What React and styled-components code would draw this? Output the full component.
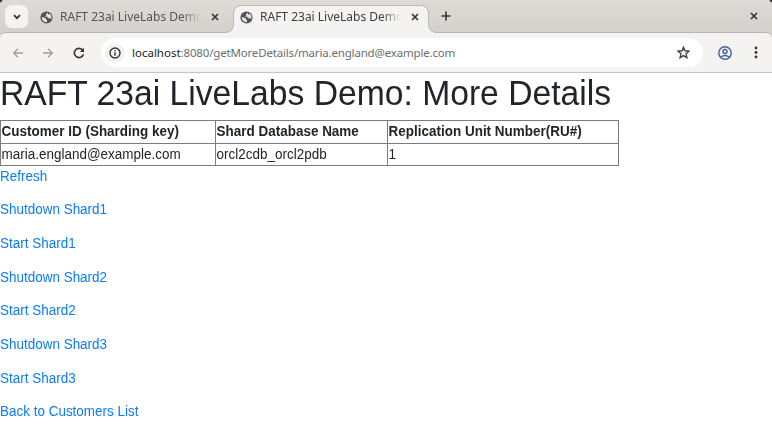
import React from "react";
import styled, { createGlobalStyle } from "styled-components";

const Global = createGlobalStyle`
  * { box-sizing: border-box; }
  body { margin: 0; background: #fff; overflow: hidden; }
`;

const Window = styled.div`
  width: 772px;
  height: 431px;
  overflow: hidden;
  background: #fff;
  font-family: "Liberation Sans", Arial, sans-serif;
  color: #212529;
`;

const Chrome = styled.div`
  background:
    radial-gradient(circle at 0 0, #35302d 1.5px, transparent 3px),
    radial-gradient(circle at 100% 0, #35302d 1.5px, transparent 3px),
    linear-gradient(#dedad7, #d4d0cb 32px);
`;

const TabStrip = styled.header`
  display: flex;
  height: 32px;
  font-family: "Noto Sans", sans-serif;
`;

const TabSearch = styled.button`
  display: grid;
  place-items: center;
  width: 23px;
  height: 23px;
  margin: 5px 0 0 5px;
  padding: 0;
  border: 0;
  border-radius: 7px;
  background: #f5f4f2;
`;

const Tab = styled.div`
  position: relative;
  z-index: 1;
  display: flex;
  align-items: center;
  height: 28px;
  margin: 5px 0 0 ${(p) => (p.$active ? 7 : 5)}px;
  padding: 0 0 5px 6px;
  width: ${(p) => (p.$active ? 196 : 193)}px;
  color: ${(p) => (p.$active ? "#3c4043" : "#53565a")};
  border: 1px solid ${(p) => (p.$active ? "#bdb9b5" : "transparent")};
  border-bottom: 0;
  border-radius: 8px 8px 0 0;
  background: ${(p) => (p.$active ? "#f4f3f2" : "transparent")};
`;

const Flare = styled.svg`
  position: absolute;
  bottom: 0;
  ${(p) => (p.$right ? "right: -9px; transform: scaleX(-1);" : "left: -9px;")}
`;

const TabTitle = styled.span`
  width: 142px;
  margin: 0 9px 0 7px;
  overflow: hidden;
  white-space: nowrap;
  font-size: 12px;
  line-height: 18px;
  mask-image: linear-gradient(90deg, #000 122px, transparent 141px);
`;

const StripButton = styled.button`
  display: grid;
  place-items: center;
  width: 20px;
  height: 22px;
  margin: 5px 0 0 ${(p) => p.$left};
  padding: 0;
  border: 0;
  background: none;
`;

const Toolbar = styled.nav`
  display: flex;
  align-items: center;
  height: 41px;
  padding: 0 0 0 11px;
  background: #f4f3f2;
  border-top: 1px solid #b9b5b0;
  border-bottom: 1px solid #c9c4bf;
  border-radius: 6px 6px 0 0;
  font-family: "Noto Sans", sans-serif;
`;

const ToolIcon = styled.button`
  display: grid;
  place-items: center;
  width: ${(p) => p.$width || "14px"};
  height: 20px;
  margin: 0 ${(p) => p.$gap || "0"} 0 0;
  padding: 0;
  border: 0;
  background: none;
`;

const Address = styled.div`
  display: flex;
  align-items: center;
  width: 602px;
  height: 29px;
  padding: 0 12px 0 4px;
  border-radius: 15px;
  background: #fff;
`;

const SiteInfo = styled.span`
  display: grid;
  place-items: center;
  width: 20px;
  height: 20px;
  border-radius: 50%;
  background: #f3f2f1;
`;

const Url = styled.span`
  flex: 1;
  margin-left: 7px;
  font-size: 11.5px;
  line-height: 18px;
  letter-spacing: -0.17px;
  white-space: nowrap;
  color: #6b6e71;
`;

const Host = styled.span`
  color: #202124;
  letter-spacing: 0;
`;

const Heading = styled.h1`
  margin: 0 0 6.7px;
  font-size: 33.67px;
  line-height: 40.4px;
  font-weight: 400;
  white-space: nowrap;
  transform: scaleY(1.05);
`;

const Table = styled.table`
  width: 619px;
  table-layout: fixed;
  border-collapse: collapse;
  font-size: 13.47px;
  line-height: 20px;

  th, td {
    padding: 1px 1px 1px 0.6px;
    border: 1px solid #7c7c7c;
    text-align: left;
    white-space: nowrap;
  }
  td {
    padding-top: 0.5px;
    padding-bottom: 0.5px;
  }
`;

const CellText = styled.span`
  display: block;
  transform: scaleY(1.07);
`;

const Col = styled.col`
  width: ${(p) => p.$width}px;
`;

const Links = styled.div`
  display: flex;
  flex-direction: column;
  align-items: flex-start;
  gap: 13.47px;
  margin-top: 0.7px;
`;

const PageLink = styled.a`
  font-size: 13.47px;
  line-height: 20.2px;
  color: #0b7bfa;
  text-decoration: none;
  transform: scaleY(1.07);
`;

const Globe = () => (
  <svg width="13" height="13" viewBox="0 0 24 24" fill="#4f5256">
    <circle cx="12" cy="12" r="11.2" />
    <path d="M3.4 11.2l5.4 1.2q2.4.4 2.2 2.8l2 1.2v4.4Q5 21 3.4 14ZM13.8 3.4l-2.4 2.2-.4 3-2 1.6 4.4.4 2 2.6 3.2.2 2.2 1.8Q22 8 18 4.8l-2 2Z" fill="#e4e1de" />
  </svg>
);

const Cross = () => (
  <svg width="8" height="8" viewBox="0 0 8 8" stroke="#34383a" strokeWidth="1.7">
    <path d="M1 1l6 6M7 1L1 7" />
  </svg>
);

const Curve = ({ right }) => (
  <Flare $right={right} width="9" height="9" viewBox="0 0 9 9">
    <path d="M0 9V8.5Q8.5 8.5 8.5 0H9V9Z" fill="#f4f3f2" />
    <path d="M0 8.5Q8.5 8.5 8.5 0" fill="none" stroke="#bdb9b5" />
  </Flare>
);

const Arrow = ({ forward }) => (
  <svg width="12" height="12" viewBox="0 0 12 12" fill="none" stroke="#a0a09f" strokeWidth="1.4">
    <path d={forward ? "M1 6h9.5M6 1.7L10.3 6 6 10.3" : "M11 6H1.5M6 1.7L1.7 6 6 10.3"} />
  </svg>
);

const links = [
  "Refresh",
  "Shutdown Shard1",
  "Start Shard1",
  "Shutdown Shard2",
  "Start Shard2",
  "Shutdown Shard3",
  "Start Shard3",
  "Back to Customers List",
];

const headers = [
  "Customer ID (Sharding key)",
  "Shard Database Name",
  "Replication Unit Number(RU#)",
];

const values = ["maria.england@example.com", "orcl2cdb_orcl2pdb", "1"];

export default function App() {
  return (
    <Window>
      <Global />
      <Chrome>
        <TabStrip>
          <TabSearch aria-label="Search tabs">
            <svg width="8" height="6" viewBox="0 0 8 6" fill="none" stroke="#303436" strokeWidth="1.8">
              <path d="M1 1.2l3 3 3-3" />
            </svg>
          </TabSearch>
          <Tab>
            <Globe />
            <TabTitle>RAFT 23ai LiveLabs Demo</TabTitle>
            <Cross />
          </Tab>
          <Tab $active>
            <Curve />
            <Globe />
            <TabTitle>RAFT 23ai LiveLabs Demo</TabTitle>
            <Cross />
            <Curve right />
          </Tab>
          <StripButton $left="7px" aria-label="New tab">
            <svg width="10" height="10" viewBox="0 0 10 10" stroke="#34383a" strokeWidth="1.6">
              <path d="M5 .5v9M.5 5h9" />
            </svg>
          </StripButton>
          <StripButton $left="288px" aria-label="Close window">
            <Cross />
          </StripButton>
        </TabStrip>
        <Toolbar>
          <ToolIcon $gap="16px" aria-label="Back"><Arrow /></ToolIcon>
          <ToolIcon $gap="17px" aria-label="Forward"><Arrow forward /></ToolIcon>
          <ToolIcon $gap="15px" aria-label="Reload">
            <svg width="12" height="12" viewBox="0 0 12 12" fill="none" stroke="#34383a" strokeWidth="1.6">
              <path d="M10.4 7.2A4.6 4.6 0 1 1 9.5 3L10.5 4" />
              <path d="M11 0.8V5H6.8Z" fill="#34383a" stroke="none" />
            </svg>
          </ToolIcon>
          <Address>
            <SiteInfo>
              <svg width="12" height="12" viewBox="0 0 12 12" fill="none" stroke="#303436" strokeWidth="1.4">
                <circle cx="6" cy="6" r="5" />
                <path d="M6 5.3v3.4M6 3v1.3" />
              </svg>
            </SiteInfo>
            <Url><Host>localhost</Host>:8080/getMoreDetails/maria.england@example.com</Url>
            <ToolIcon $width="16px" aria-label="Bookmark">
              <svg width="13" height="13" viewBox="0 0 13 13" fill="none" stroke="#3f4346" strokeWidth="1.4">
                <path d="M6.5 1.3L8 4.8l4 .4-3 2.6.9 3.9-3.4-2.1-3.4 2.1.9-3.9-3-2.6 4-.4Z" />
              </svg>
            </ToolIcon>
          </Address>
          <ToolIcon $width="44px" aria-label="Profile">
            <svg width="14" height="14" viewBox="0 0 14 14" fill="none" stroke="#43609f" strokeWidth="1.4">
              <circle cx="7" cy="7" r="6.2" />
              <circle cx="7" cy="5.5" r="2" />
              <path d="M2.8 11.2Q7 7.9 11.2 11.2" />
            </svg>
          </ToolIcon>
          <ToolIcon $width="17px" aria-label="Menu">
            <svg width="4" height="13" viewBox="0 0 4 13" fill="#34383a">
              <circle cx="2" cy="2" r="1.4" />
              <circle cx="2" cy="6.5" r="1.4" />
              <circle cx="2" cy="11" r="1.4" />
            </svg>
          </ToolIcon>
        </Toolbar>
      </Chrome>
      <main>
        <Heading>RAFT 23ai LiveLabs Demo: More Details</Heading>
        <Table>
          <colgroup>
            <Col $width={215} />
            <Col $width={172} />
            <Col $width={231} />
          </colgroup>
          <tbody>
            <tr>
              {headers.map((text) => <th key={text}><CellText>{text}</CellText></th>)}
            </tr>
            <tr>
              {values.map((text) => <td key={text}><CellText>{text}</CellText></td>)}
            </tr>
          </tbody>
        </Table>
        <Links>
          {links.map((label) => (
            <PageLink key={label} href="#">{label}</PageLink>
          ))}
        </Links>
      </main>
    </Window>
  );
}
